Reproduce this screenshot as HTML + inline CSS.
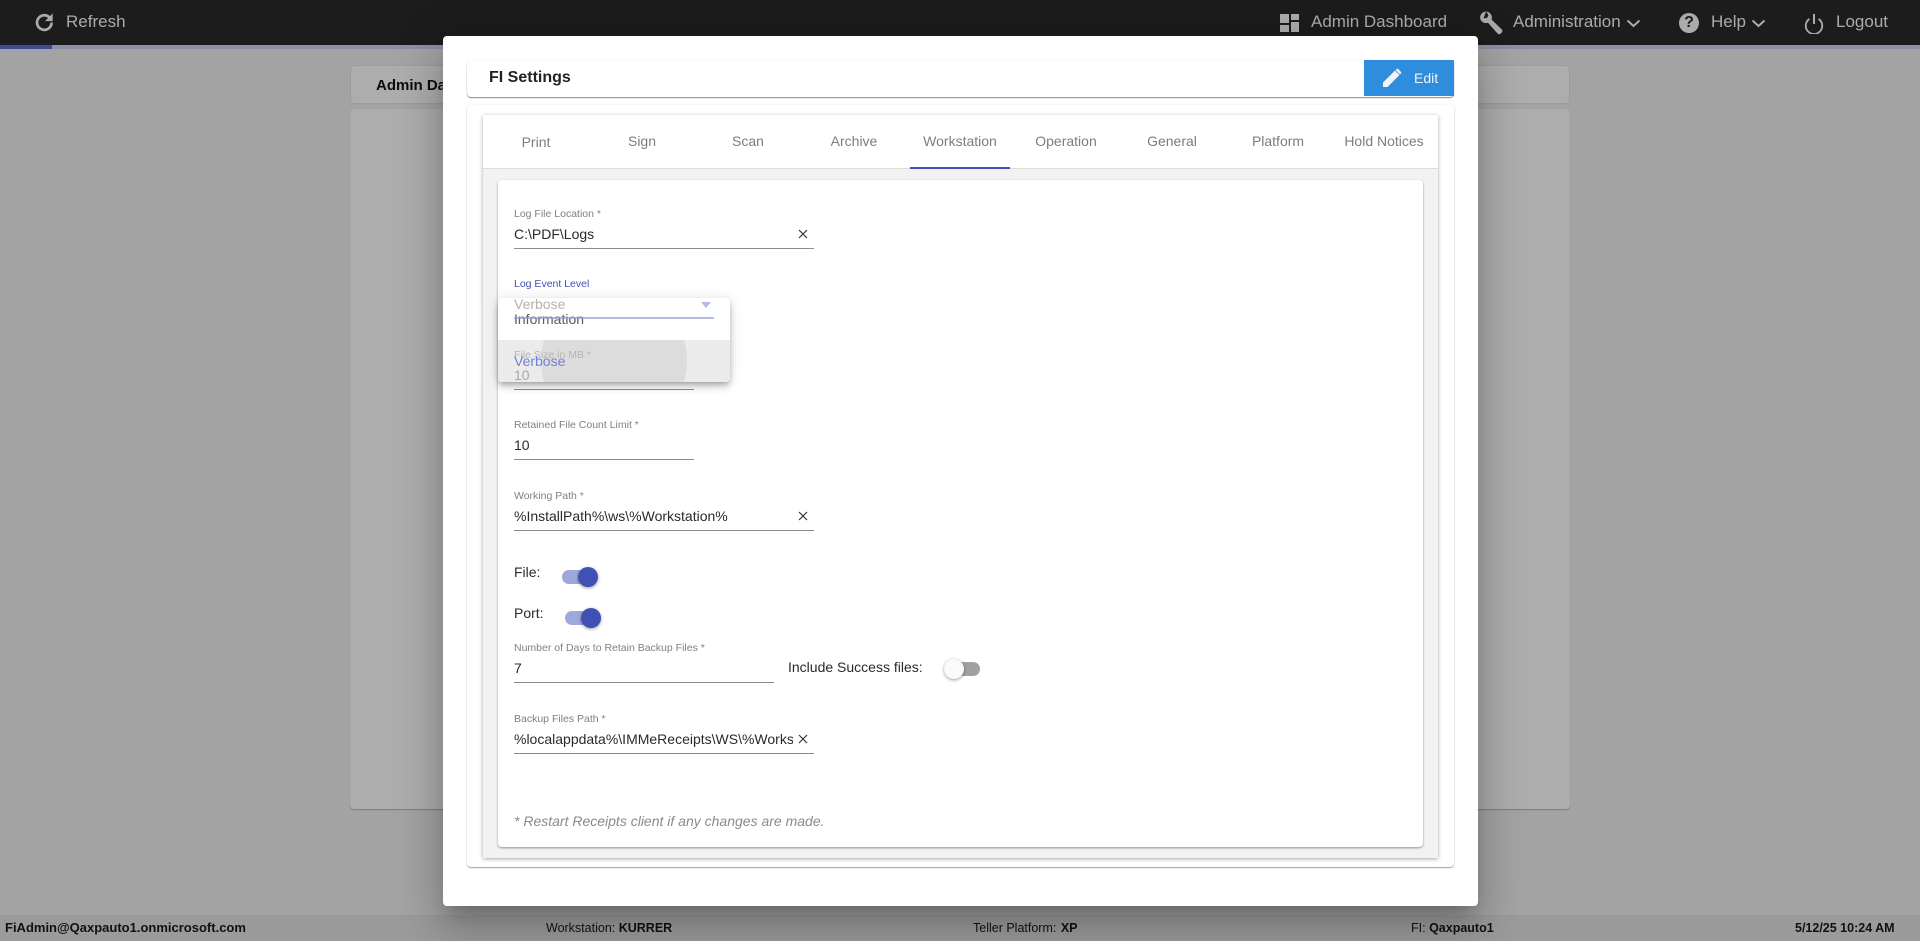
<!DOCTYPE html>
<html><head><meta charset="utf-8"><title>FI Settings</title>
<style>
html,body{margin:0;padding:0;width:1920px;height:941px;overflow:hidden;background:#a3a3a3;font-family:"Liberation Sans",sans-serif}
div,span,svg{position:absolute;box-sizing:border-box}
.t{white-space:nowrap;line-height:20px;height:20px}
.n{color:#ababab;font-size:17px;top:12px}
.l{font-size:10.5px;color:#808080}
.v{font-size:14px;color:#2a2a2a}
.u{height:1px;background:#8c8c8c}
.tab{font-size:14px;color:#7d7d7d;top:131px;text-align:center;width:100px}
.f{font-size:12.5px;top:918px;color:#111}
b{font-weight:bold}
</style></head><body>
<div style="left:0;top:0;width:1920px;height:45px;background:#1c1c1c"></div>
<div style="left:0;top:45px;width:1920px;height:4px;background:#8b8ea6"></div>
<div style="left:0;top:45px;width:52px;height:4px;background:#3c4a91"></div>
<svg style="left:33px;top:11px" width="23" height="23" viewBox="0 0 24 24"><path d="M19.4 12a7.6 7.6 0 1 1-2.3-5.4" fill="none" stroke="#ababab" stroke-width="2.8"/><path d="M20.5 2.5v8h-8z" fill="#ababab"/></svg>
<div class="t n" style="left:66px">Refresh</div>
<div style="left:1280px;top:14px;width:9px;height:9px;background:#ababab"></div>
<div style="left:1280px;top:25px;width:9px;height:7px;background:#ababab"></div>
<div style="left:1291px;top:14px;width:8px;height:6px;background:#ababab"></div>
<div style="left:1291px;top:22px;width:8px;height:10px;background:#ababab"></div>
<div class="t n" style="left:1311px">Admin Dashboard</div>
<svg style="left:1479px;top:10px" width="25" height="25" viewBox="0 0 25 25"><path d="M7 1.5a6 6 0 0 0-5.500 8 6 6 0 0 0 7.500 3.200l9.500 10.800a2.200 2.200 0 0 0 3.200.1l1-1a2.200 2.200 0 0 0 0-3.200L12.500 9.500A6 6 0 0 0 7 1.500l2.500 3.500-1.500 3-3.500.3z" fill="#ababab"/></svg>
<div class="t n" style="left:1513px">Administration</div>
<svg style="left:1626px;top:18px" width="15" height="10" viewBox="0 0 15 10"><path d="M1.500 2.500l6 5.500 6-5.500" fill="none" stroke="#ababab" stroke-width="2"/></svg>
<div style="left:1679px;top:13px;width:20px;height:20px;border-radius:50%;background:#ababab"></div>
<div class="t" style="left:1679px;top:13px;width:20px;text-align:center;font-size:16px;font-weight:bold;color:#1c1c1c">?</div>
<div class="t n" style="left:1711px">Help</div>
<svg style="left:1751px;top:18px" width="15" height="10" viewBox="0 0 15 10"><path d="M1.500 2.500l6 5.500 6-5.500" fill="none" stroke="#ababab" stroke-width="2"/></svg>
<svg style="left:1803px;top:13px" width="22" height="21" viewBox="0 0 24 23"><path d="M7 6.500a9 9 0 1 0 10 0" fill="none" stroke="#ababab" stroke-width="2"/><path d="M12 1v11" stroke="#ababab" stroke-width="2.200"/></svg>
<div class="t n" style="left:1836px">Logout</div>

<div style="left:350px;top:65px;width:1220px;height:39px;background:#adadad;border:1px solid #9c9c9c;border-radius:4px"></div>
<div class="t" style="left:376px;top:76px;font-size:15px;font-weight:bold;color:#0c0c0c">Admin Dashboard</div>
<div style="left:350px;top:109px;width:1220px;height:700px;background:#adadad;border-radius:4px;box-shadow:0 1px 1px rgba(0,0,0,.25)"></div>

<div style="left:0;top:915px;width:1920px;height:26px;background:#999b9c"></div>
<div class="t f" style="left:5px;font-weight:bold;font-size:13px">FiAdmin@Qaxpauto1.onmicrosoft.com</div>
<div class="t f" style="left:546px">Workstation: <b>KURRER</b></div>
<div class="t f" style="left:973px">Teller Platform: <b style="margin-left:1px">XP</b></div>
<div class="t f" style="left:1411px">FI: <b>Qaxpauto1</b></div>
<div class="t f" style="left:1795px;font-weight:bold">5/12/25 10:24 AM</div>

<div style="left:443px;top:36px;width:1035px;height:870px;background:#fff;border-radius:4px;box-shadow:0 11px 15px -7px rgba(0,0,0,.2),0 24px 38px 3px rgba(0,0,0,.14),0 9px 46px 8px rgba(0,0,0,.12)"></div>

<div style="left:467px;top:60px;width:987px;height:37px;background:#fff;border-radius:4px;box-shadow:0 1px 1px rgba(0,0,0,.45),0 0 2px rgba(0,0,0,.06)"></div>
<div class="t" style="left:489px;top:68px;font-size:16px;font-weight:bold;color:#222">FI Settings</div>
<div style="left:1364px;top:60px;width:90px;height:36px;background:#2e8ddc"></div>
<svg style="left:1382px;top:68px" width="20" height="20" viewBox="0 0 20 20"><path d="M1 19v-4.500L13 2.500l4.500 4.500L5.500 19z" fill="#f3f3f3"/><path d="M14.300 1.300a1.500 1.500 0 0 1 2.100 0l2.300 2.300a1.500 1.500 0 0 1 0 2.100l-.7.700-4.400-4.400z" fill="#f3f3f3"/></svg>
<div class="t" style="left:1414px;top:68px;font-size:14px;color:#f3f3f3">Edit</div>

<div style="left:467px;top:105px;width:987px;height:762px;background:#fff;border-radius:4px;box-shadow:0 1px 1px rgba(0,0,0,.35),0 0 3px rgba(0,0,0,.08)"></div>
<div style="left:483px;top:115px;width:955px;height:743px;background:#f2f2f2;box-shadow:0 1px 4px rgba(0,0,0,.35)"></div>
<div style="left:483px;top:115px;width:955px;height:54px;background:#fff;border-bottom:1px solid #dcdcdc"></div>
<div class="t tab" style="left:486px;top:132px">Print</div>
<div class="t tab" style="left:592px">Sign</div>
<div class="t tab" style="left:698px">Scan</div>
<div class="t tab" style="left:804px">Archive</div>
<div class="t tab" style="left:910px">Workstation</div>
<div class="t tab" style="left:1016px">Operation</div>
<div class="t tab" style="left:1122px">General</div>
<div class="t tab" style="left:1228px">Platform</div>
<div class="t tab" style="left:1334px">Hold Notices</div>
<div style="left:910px;top:167px;width:100px;height:2px;background:#3f51b5"></div>

<div style="left:498px;top:180px;width:925px;height:667px;background:#fff;border-radius:4px;box-shadow:0 1px 2px rgba(0,0,0,.4)"></div>

<div class="t l" style="left:514px;top:204px">Log File Location *</div>
<div class="t v" style="left:514px;top:224px">C:\PDF\Logs</div>
<svg style="left:798px;top:229px" width="10" height="10" viewBox="0 0 10 10"><path d="M1 1l8 8M9 1l-8 8" stroke="#333" stroke-width="1.200"/></svg>
<div class="u" style="left:514px;top:248px;width:300px"></div>

<div class="t l" style="left:514px;top:274px;color:#3f51b5">Log Event Level</div>

<div class="t l" style="left:514px;top:345px">File Size in MB *</div>
<div class="t v" style="left:514px;top:365px">10</div>
<div class="u" style="left:514px;top:389px;width:180px"></div>

<div style="left:498px;top:298px;width:232px;height:84px;background:#fff;border-radius:4px;box-shadow:0 3px 5px -1px rgba(0,0,0,.2),0 5px 8px rgba(0,0,0,.14),0 1px 14px rgba(0,0,0,.12);overflow:hidden">
<div style="left:0;top:42px;width:232px;height:42px;background:#ebebeb"></div>
<div style="left:43px;top:-10px;width:146px;height:146px;border-radius:50%;background:#dcdcdc;clip-path:inset(52px 0 52px 0)"></div>
<div class="t l" style="left:16px;top:47px;color:#b5b5b5">File Size in MB *</div>
<div class="t v" style="left:16px;top:67px;color:#a8a8a8">10</div>
<div class="t v" style="left:16px;top:-4px;color:#b3b3b3">Verbose</div>
<svg style="left:202px;top:4px" width="12" height="7" viewBox="0 0 12 7"><path d="M1 0h10L6 6z" fill="#b4bae0"/></svg>
<div class="t v" style="left:16px;top:11px;color:#5a5a5a">Information</div>
<div style="left:16px;top:19px;width:200px;height:2px;background:rgba(150,160,215,.7)"></div>
<div class="t v" style="left:16px;top:53px;color:#6f80d6">Verbose</div>
</div>

<div class="t l" style="left:514px;top:415px">Retained File Count Limit *</div>
<div class="t v" style="left:514px;top:435px">10</div>
<div class="u" style="left:514px;top:459px;width:180px"></div>

<div class="t l" style="left:514px;top:486px">Working Path *</div>
<div class="t v" style="left:514px;top:506px">%InstallPath%\ws\%Workstation%</div>
<svg style="left:798px;top:511px" width="10" height="10" viewBox="0 0 10 10"><path d="M1 1l8 8M9 1l-8 8" stroke="#333" stroke-width="1.200"/></svg>
<div class="u" style="left:514px;top:530px;width:300px"></div>

<div class="t v" style="left:514px;top:562px">File:</div>
<div style="left:562px;top:570px;width:28px;height:14px;border-radius:7px;background:#9fa8da"></div>
<div style="left:578px;top:567px;width:20px;height:20px;border-radius:50%;background:#3f51b5;box-shadow:0 1px 3px rgba(0,0,0,.4)"></div>

<div class="t v" style="left:514px;top:603px">Port:</div>
<div style="left:565px;top:611px;width:28px;height:14px;border-radius:7px;background:#9fa8da"></div>
<div style="left:581px;top:608px;width:20px;height:20px;border-radius:50%;background:#3f51b5;box-shadow:0 1px 3px rgba(0,0,0,.4)"></div>

<div class="t l" style="left:514px;top:638px">Number of Days to Retain Backup Files *</div>
<div class="t v" style="left:514px;top:658px">7</div>
<div class="u" style="left:514px;top:682px;width:260px"></div>
<div class="t v" style="left:788px;top:657px">Include Success files:</div>
<div style="left:952px;top:662px;width:28px;height:14px;border-radius:7px;background:#a0a0a0"></div>
<div style="left:944px;top:659px;width:20px;height:20px;border-radius:50%;background:#fafafa;box-shadow:0 1px 3px rgba(0,0,0,.4)"></div>

<div class="t l" style="left:514px;top:709px">Backup Files Path *</div>
<div class="t v" style="left:514px;top:729px;width:279px;overflow:hidden">%localappdata%\IMMeReceipts\WS\%Workstation%</div>
<svg style="left:798px;top:734px" width="10" height="10" viewBox="0 0 10 10"><path d="M1 1l8 8M9 1l-8 8" stroke="#333" stroke-width="1.200"/></svg>
<div class="u" style="left:514px;top:753px;width:300px"></div>

<div class="t" style="left:514px;top:811px;font-size:14px;font-style:italic;color:#8a8a8a">* Restart Receipts client if any changes are made.</div>
</body></html>
